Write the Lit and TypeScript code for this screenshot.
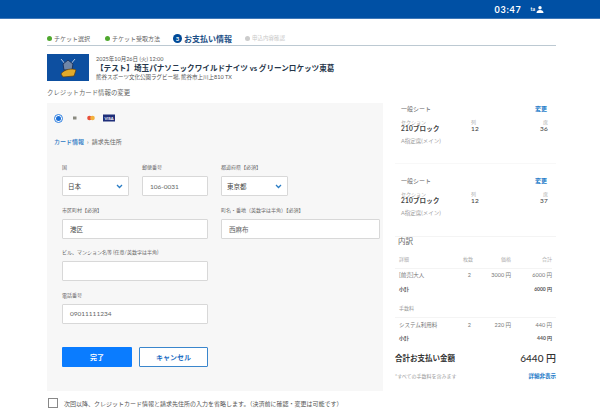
import { LitElement, html, css, svg } from 'lit';
import { customElement } from 'lit/decorators.js';

const seats = ['36', '37'];

@customElement('app-root')
export class AppRoot extends LitElement {
  static override styles = css`
    :host {
      display: block;
      width: 600px;
      height: 413px;
      overflow: hidden;
      background: #fff;
      color: #333;
      font-family: Lato, "Noto Sans CJK JP", sans-serif;
      font-size: 6px;
    }
    * { box-sizing: border-box; }
    header {
      height: 19px;
      background: #0050a4;
      border-bottom: 1px solid #3f78b8;
      display: flex;
      align-items: center;
      justify-content: flex-end;
      padding-right: 56px;
      color: #fff;
    }
    .time { font-size: 9px; font-weight: 700; letter-spacing: 0.8px; margin-right: 9px; }
    .user { font-size: 5px; font-weight: 700; margin-right: 1px; }
    .page { padding: 0 44px 0 47px; }
    .steps {
      height: 27px;
      padding-top: 12px;
      border-bottom: 1px solid #bcc9d2;
      display: flex;
      align-items: center;
      font-size: 6px;
      color: #666;
    }
    .step { display: flex; align-items: center; gap: 2px; white-space: nowrap; }
    .step.first { width: 58px; }
    .step.second { width: 65px; }
    .done-dot { width: 5px; height: 5px; border-radius: 50%; background: #4fa82e; }
    .num {
      width: 9px; height: 9px; border-radius: 50%;
      background: #004a98; color: #fff; font-size: 6px; font-weight: 700;
      display: flex; align-items: center; justify-content: center;
    }
    .step.now { font-size: 8px; font-weight: 700; color: #1c4f86; margin-right: 13px; margin-left: 3px; }
    .step.todo { color: #c8c8c8; font-size: 5.5px; }
    .todo-dot { width: 5px; height: 5px; border-radius: 50%; background: #ccc; }
    .event { display: flex; gap: 7px; margin-top: 8px; height: 27px; }
    .thumb { width: 42px; height: 27px; background: #0d4fa0; display: flex; align-items: center; justify-content: center; }
    .event-text { display: flex; flex-direction: column; justify-content: center; color: #555; font-size: 5.5px; line-height: 8px; }
    .event-title { font-size: 7.6px; font-weight: 700; color: #26364a; line-height: 10px; white-space: nowrap; }
    .heading { margin-top: 7px; font-size: 6.4px; color: #666; line-height: 9px; }
    .cols { display: flex; margin-top: 6px; gap: 12px; }
    .panel { width: 336px; height: 288px; background: #f7f7f7; padding: 10px 15px 0; }
    .pay { display: flex; align-items: center; height: 10px; margin-left: -8px; gap: 8px; }
    .radio { width: 9px; height: 9px; border-radius: 50%; border: 1px solid #2f80e0; background: #fff; display: flex; align-items: center; justify-content: center; }
    .radio i { display: block; width: 5px; height: 5px; border-radius: 50%; background: #1a6fd8; }
    .crumb { display: flex; align-items: center; margin: 14px 0 0 -8px; height: 9px; gap: 3px; font-size: 6px; color: #666; }
    .crumb b { color: #2a77c4; font-weight: 500; }
    .grid { display: grid; grid-template-columns: 67px 66px 67px 79px; column-gap: 13px; margin-top: 18px; }
    .field { display: flex; flex-direction: column; margin-bottom: 10.5px; }
    .field.wide { grid-column: span 2; }
    .field.wide-right { grid-column: 3 / 5; }
    .field.row { grid-column: 1 / 3; grid-row: 4; }
    label { font-size: 5px; color: #666; line-height: 7px; height: 12px; white-space: nowrap; }
    .box {
      height: 20px; background: #fff; border: 1px solid #d8d8d8; border-radius: 1px;
      display: flex; align-items: center; justify-content: space-between;
      padding: 0 5px; font-size: 6.5px; color: #444;
    }
    .box.indent { padding-left: 7px; }
    .box.thin { color: #666; }
    .buttons { display: flex; gap: 7px; margin-top: 12.5px; }
    .btn { width: 70px; height: 20px; display: flex; align-items: center; justify-content: center; font-size: 7px; font-weight: 700; border-radius: 1px; }
    .primary { background: #0a7cff; color: #fff; }
    .secondary { width: 69px; background: #fff; color: #1f6fc4; border: 1px solid #3a86cc; }
    aside { width: 161px; }
    .seat { height: 61px; padding: 1px 8px 0 6px; }
    .seat + .seat { margin-top: 11px; border-top: 0; }
    .seat:first-child { border-bottom: 1px solid #f8f8f8; }
    .seat-top { display: flex; justify-content: space-between; align-items: center; font-size: 6px; color: #666; height: 9px; }
    .seat-top .link { margin-right: 1px; }
    .link { color: #1a7ac8; font-weight: 700; font-size: 6px; }
    .seat-grid { display: grid; grid-template-columns: 70px 1fr 1fr; margin-top: 7px; font-size: 6.5px; font-weight: 700; color: #444; line-height: 7px; letter-spacing: 0.2px; }
    .seat-grid small { display: block; font-size: 5px; font-weight: 400; color: #aaa; line-height: 5px; letter-spacing: 0; }
    .seat-grid div:nth-child(3) { text-align: right; font-weight: 500; }
    .seat-grid div:nth-child(2) { font-weight: 500; }
    .seat-note { margin-top: 6px; font-size: 5.5px; color: #999; line-height: 7px; }
    .breakdown { border-top: 1px solid #f4f4f4; }
    .breakdown h3 { margin: 0; padding-left: 3px; font-size: 7.5px; font-weight: 400; color: #666; line-height: 10px; }
    .line { display: grid; grid-template-columns: 70px 41px 42px; padding-left: 4px; width: 157px; align-items: center; font-size: 5px; color: #888; line-height: 7px; white-space: nowrap; }
    .line { grid-template-columns: 53px 21px 38px 41px; }
    .line span:nth-child(n+2) { text-align: right; }
    .line.head { margin-top: 8.5px; color: #aaa; padding-bottom: 5px; border-bottom: 1px solid #f4f4f4; }
    .line.item { margin-top: 3px; color: #777; font-size: 5.5px; }
    .line.item span:nth-child(2) { padding-right: 2px; }
    .line.sub { margin-top: 7px; color: #555; font-weight: 700; font-size: 5px; }
    .fee { margin-top: 12px; padding-left: 4px; font-size: 5px; color: #999; line-height: 7px; margin-bottom: 5.5px; }
    .fee-rule { border-top: 1px solid #f4f4f4; margin-bottom: 3.5px; }
    .fee-rule + .line { margin-top: 0; }
    .fee-rule ~ .line.sub { margin-top: 6px; }
    .total { display: flex; justify-content: space-between; align-items: center; margin-top: 8.5px; color: #333; height: 14px; }
    .total b { font-size: 7.5px; font-weight: 700; }
    .total em { font-style: normal; font-size: 10px; font-weight: 500; }
    .note { display: flex; justify-content: space-between; margin-top: 8px; font-size: 5px; color: #999; line-height: 8px; }
    .note .link { font-size: 5.5px; }
    .check { display: flex; align-items: center; gap: 6px; margin-top: 7px; font-size: 6px; color: #555; white-space: nowrap; margin-left: 1px; }
    .check i { display: block; width: 10px; height: 10px; border: 1px solid #888; background: #fff; }
  `;

  private logo() {
    return svg`<svg width="24" height="24" viewBox="0 0 24 24">
      <path d="M5 3l5 6M19 3l-5 6" stroke="#c9d4e4" stroke-width="0.9"/>
      <path d="M12 4 7 8l1 6h8l1-6z" fill="#6f86a8" stroke="#1d3560" stroke-width="1"/>
      <path d="M5 18c3-5 12-6 15-4l-2 6-11 1z" fill="#e2aa2a" stroke="#5b3c10" stroke-width="0.7"/>
    </svg>`;
  }

  private person() {
    return svg`<svg width="8" height="7" viewBox="0 0 8 7">
      <circle cx="4" cy="1.8" r="1.7" fill="#fff"/>
      <path d="M0.5 7c0-2 1.5-3 3.5-3s3.5 1 3.5 3z" fill="#fff"/>
    </svg>`;
  }

  private chevron() {
    return svg`<svg width="7" height="5" viewBox="0 0 7 5">
      <path d="M1 1l2.5 2.5L6 1" fill="none" stroke="#2a7cc4" stroke-width="1.3"/>
    </svg>`;
  }

  private cards() {
    return svg`<svg width="44" height="8" viewBox="0 0 44 8">
      <rect x="2" y="2.5" width="3.5" height="3" fill="#8a8a80"/>
      <circle cx="18.5" cy="4" r="2.3" fill="#e8503a"/>
      <circle cx="21.5" cy="4" r="2.3" fill="#f3b03c"/>
      <rect x="32" y="0.5" width="12" height="7" fill="#1f2f7a"/>
      <text x="38" y="5.6" text-anchor="middle" font-size="4" font-weight="700" fill="#fff">VISA</text>
    </svg>`;
  }

  private seat(no: string) {
    return html`<div class="seat">
      <div class="seat-top"><span>一般シート</span><span class="link">変更</span></div>
      <div class="seat-grid">
        <div><small>セクション</small>210ブロック</div>
        <div><small>列</small>12</div>
        <div><small>席</small>${no}</div>
      </div>
      <div class="seat-note">A指定席(メイン)</div>
    </div>`;
  }

  override render() {
    return html`
      <header>
        <span class="time">03:47</span>
        <span class="user">ta</span>${this.person()}
      </header>
      <div class="page">
        <div class="steps">
          <div class="step first"><span class="done-dot"></span>チケット選択</div>
          <div class="step second"><span class="done-dot"></span>チケット受取方法</div>
          <div class="step now"><span class="num">3</span>お支払い情報</div>
          <div class="step todo"><span class="todo-dot"></span>申込内容確認</div>
        </div>
        <div class="event">
          <div class="thumb">${this.logo()}</div>
          <div class="event-text">
            <div>2025年10月26日 (火) 12:00</div>
            <div class="event-title">【テスト】埼玉パナソニックワイルドナイツ vs グリーンロケッツ東葛</div>
            <div>熊谷スポーツ文化公園ラグビー場, 熊谷市上川上810 TX</div>
          </div>
        </div>
        <div class="heading">クレジットカード情報の変更</div>
        <div class="cols">
          <section class="panel">
            <div class="pay">
              <span class="radio"><i></i></span>
              ${this.cards()}
            </div>
            <div class="crumb"><b>カード情報</b><span>›</span><span>請求先住所</span></div>
            <div class="grid">
              <div class="field"><label>国</label><div class="box">日本${this.chevron()}</div></div>
              <div class="field"><label>郵便番号</label><div class="box indent thin">106-0031</div></div>
              <div class="field"><label>都道府県【必須】</label><div class="box">東京都${this.chevron()}</div></div>
              <div></div>
              <div class="field wide"><label>市区町村【必須】</label><div class="box indent">港区</div></div>
              <div class="field wide-right"><label>町名・番地（英数字は半角）【必須】</label><div class="box indent thin">西麻布</div></div>
              <div class="field wide"><label>ビル、マンション名等 (任意/英数字は半角)</label><div class="box"></div></div>
              <div class="field row"><label>電話番号</label><div class="box indent thin">09011111234</div></div>
            </div>
            <div class="buttons">
              <div class="btn primary">完了</div>
              <div class="btn secondary">キャンセル</div>
            </div>
          </section>
          <aside>
            ${seats.map((s) => this.seat(s))}
            <div class="breakdown">
              <h3>内訳</h3>
              <div class="line head"><span>詳細</span><span>枚数</span><span>価格</span><span>合計</span></div>
              <div class="line item"><span>[前売]大人</span><span>2</span><span>3000 円</span><span>6000 円</span></div>
              <div class="line sub"><span>小計</span><span></span><span></span><span>6000 円</span></div>
              <div class="fee">手数料</div>
              <div class="fee-rule"></div>
              <div class="line item"><span>システム利用料</span><span>2</span><span>220 円</span><span>440 円</span></div>
              <div class="line sub"><span>小計</span><span></span><span></span><span>440 円</span></div>
              <div class="total"><b>合計お支払い金額</b><em>6440 円</em></div>
              <div class="note"><span>*すべての手数料を含みます</span><span class="link">詳細非表示</span></div>
            </div>
          </aside>
        </div>
        <div class="check"><i></i><span>次回以降、クレジットカード情報と請求先住所の入力を省略します。（決済前に確認・変更は可能です）</span></div>
      </div>
    `;
  }
}
